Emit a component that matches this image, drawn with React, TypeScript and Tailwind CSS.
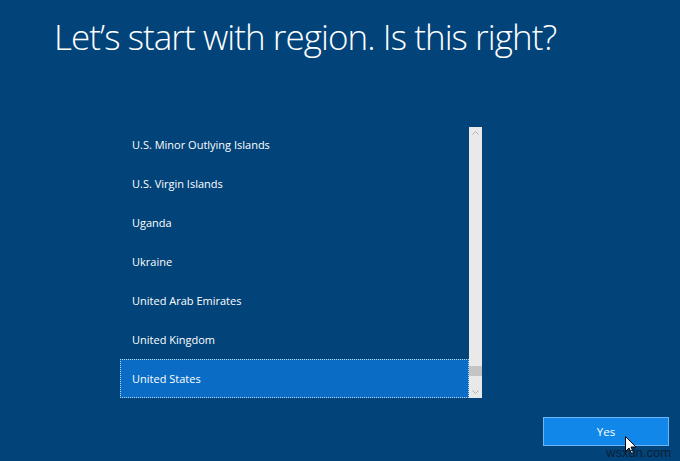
import React from "react";

const items = [
  "U.S. Minor Outlying Islands",
  "U.S. Virgin Islands",
  "Uganda",
  "Ukraine",
  "United Arab Emirates",
  "United Kingdom",
  "United States",
];

export default function App() {
  return (
    <div className="relative w-[680px] h-[461px] overflow-hidden bg-[#02447a] font-['Segoe_UI','Open_Sans',sans-serif] text-white">
      <h1 className="pl-[54px] pt-[14px] text-[35px] font-light leading-[46px] tracking-[-0.95px]">
        Let’s start with region. Is this right?
      </h1>
      <div className="mt-[67px] ml-[120px] flex h-[271px] w-[362px]">
        <div className="flex flex-1 flex-col justify-end overflow-hidden">
          {items.map((it) => {
            const sel = it === "United States";
            return (
              <div
                key={it}
                className={
                  sel
                    ? "flex h-[39px] shrink-0 items-center border border-dotted border-[#b9d7f2] bg-[#0a6cc4] pl-[11px] pt-[2px] text-[11px]"
                    : "flex h-[39px] shrink-0 items-center pl-[12px] pt-[2px] text-[11px]"
                }
              >
                {it}
              </div>
            );
          })}
        </div>
        <div className="flex w-[13px] flex-col bg-[#e9e9e9]">
          <div className="flex h-[12px] items-center justify-center">
            <svg width="7" height="4" viewBox="0 0 7 4">
              <path d="M0.5 3.5 L3.5 0.5 L6.5 3.5" fill="none" stroke="#b0b0b0" strokeWidth="1" />
            </svg>
          </div>
          <div className="h-[227px]" />
          <div className="h-[10px] bg-[#c4c4c4]" />
          <div className="flex-1" />
          <div className="flex h-[12px] items-center justify-center">
            <svg width="7" height="4" viewBox="0 0 7 4">
              <path d="M0.5 0.5 L3.5 3.5 L6.5 0.5" fill="none" stroke="#b0b0b0" strokeWidth="1" />
            </svg>
          </div>
        </div>
      </div>
      <div className="mt-[19px] flex justify-end pr-[11px]">
        <button className="flex h-[29px] w-[126px] items-center justify-center border border-[#6db5f4] bg-[#1187ea] text-[11.5px] text-white">
          Yes
        </button>
      </div>
      <svg
        className="absolute left-[625px] top-[436px]"
        width="12"
        height="19"
        viewBox="0 0 12 19"
      >
        <path
          d="M0.5 0.5 L0.5 15.5 L4 12 L6.5 17.5 L8.5 16.5 L6 11 L11 11 Z"
          fill="white"
          stroke="black"
          strokeWidth="1"
        />
      </svg>
      <div className="absolute left-[606px] top-[445px] font-['Liberation_Sans',sans-serif] text-[13px] leading-[15px] text-[#0b1f35]">
        wsxdn.com
      </div>
    </div>
  );
}
